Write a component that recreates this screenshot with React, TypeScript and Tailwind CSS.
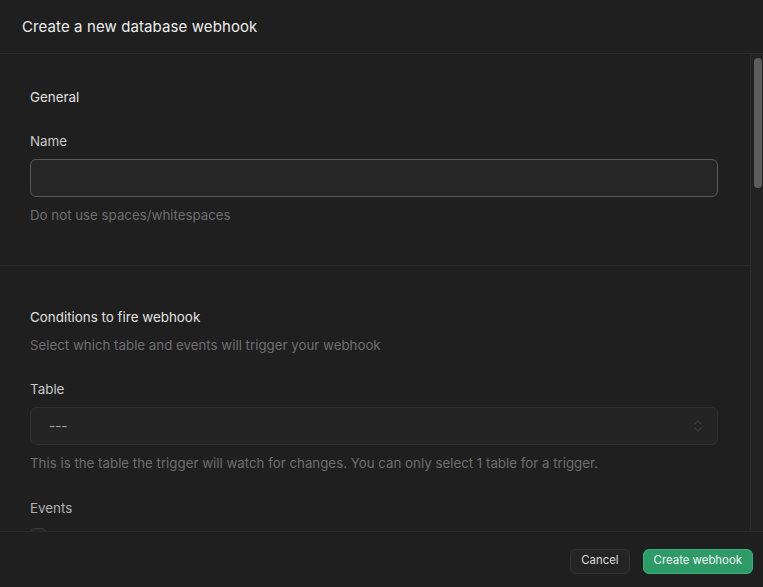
import React from 'react';

const font = { fontFamily: 'Inter, "Noto Sans", sans-serif' };

const App: React.FC = () => {
  return (
    <div
      className="w-[763px] h-[587px] bg-[#1f1f1f] flex flex-col overflow-hidden font-['Inter','Noto_Sans',sans-serif]"
      style={font}
    >
      {/* Header */}
      <div className="h-[54px] shrink-0 flex items-center px-[22px] pt-[2px] border-b border-[#2a2a2a]">
        <h1 className="text-[15px] text-[#ededed] tracking-[0.1px]">Create a new database webhook</h1>
      </div>

      {/* Body */}
      <div className="flex-1 flex min-h-0">
        <div className="flex-1 overflow-hidden">
          {/* General */}
          <section className="pt-[33px] pb-[40px] pl-[30px] pr-[32px] border-b border-[#2a2a2a]">
            <h2 className="text-[13.4px] leading-5 text-[#e2e2e2]">General</h2>
            <div className="mt-6">
              <label className="block text-[13.4px] leading-5 text-[#c8c8c8]">Name</label>
              <input
                type="text"
                className="mt-2 block w-full h-[38px] rounded-[6px] bg-[#262626] border border-[#5a5a5a] px-3 text-sm text-[#ededed] outline-none"
              />
              <p className="mt-2 text-[13.3px] leading-5 text-[#6e6e6e]">Do not use spaces/whitespaces</p>
            </div>
          </section>

          {/* Conditions */}
          <section className="pt-[41px] pl-[30px] pr-[32px]">
            <h2 className="text-[13.4px] leading-5 text-[#e2e2e2]">Conditions to fire webhook</h2>
            <p className="mt-2 text-[13.3px] leading-5 text-[#6e6e6e]">Select which table and events will trigger your webhook</p>
            <div className="mt-6">
              <label className="block text-[13.4px] leading-5 text-[#c8c8c8]">Table</label>
              <div className="mt-2 h-[38px] w-full rounded-[6px] bg-[#242424] border border-[#2e2e2e] flex items-center justify-between pl-[18px] pr-[14px]">
                <span className="text-[13.4px] text-[#a8a8a8]">---</span>
                <svg width="10" height="14" viewBox="0 0 10 14" fill="none" stroke="#383838" strokeWidth="1.3" strokeLinecap="round" strokeLinejoin="round">
                  <path d="M2 5l3-3 3 3" />
                  <path d="M2 9l3 3 3-3" />
                </svg>
              </div>
              <p className="mt-2 text-[13.3px] leading-5 text-[#6e6e6e]">
                This is the table the trigger will watch for changes. You can only select 1 table for a trigger.
              </p>
            </div>
            <div className="mt-[25px]">
              <label className="block text-[13.4px] leading-5 text-[#b0b0b0]">Events</label>
              <div className="mt-[10px] w-4 h-4 rounded-[4px] border border-[#3a3a3a] bg-[#262626]" />
            </div>
          </section>
        </div>

        {/* Scrollbar */}
        <div className="w-[13px] shrink-0 border-l border-[#2c2c2c] bg-[#222222] pt-[4px] pl-[3px] pr-[1px]">
          <div className="h-[130px] rounded-full bg-[#5c5c5c]" />
        </div>
      </div>

      {/* Footer */}
      <div className="h-[56px] shrink-0 border-t border-[#2a2a2a] flex items-center justify-end gap-[13px] pr-[10px] pt-[3px]">
        <button className="h-[25px] px-[10px] rounded-[6px] bg-[#242424] border border-[#333333] text-[11.4px] text-[#dcdcdc]">
          Cancel
        </button>
        <button className="h-[25px] px-[10px] rounded-[6px] bg-[#2d9a67] border border-[#3bae78] text-[11.4px] text-[#f4f4f4]">
          Create webhook
        </button>
      </div>
    </div>
  );
};

export default App;
